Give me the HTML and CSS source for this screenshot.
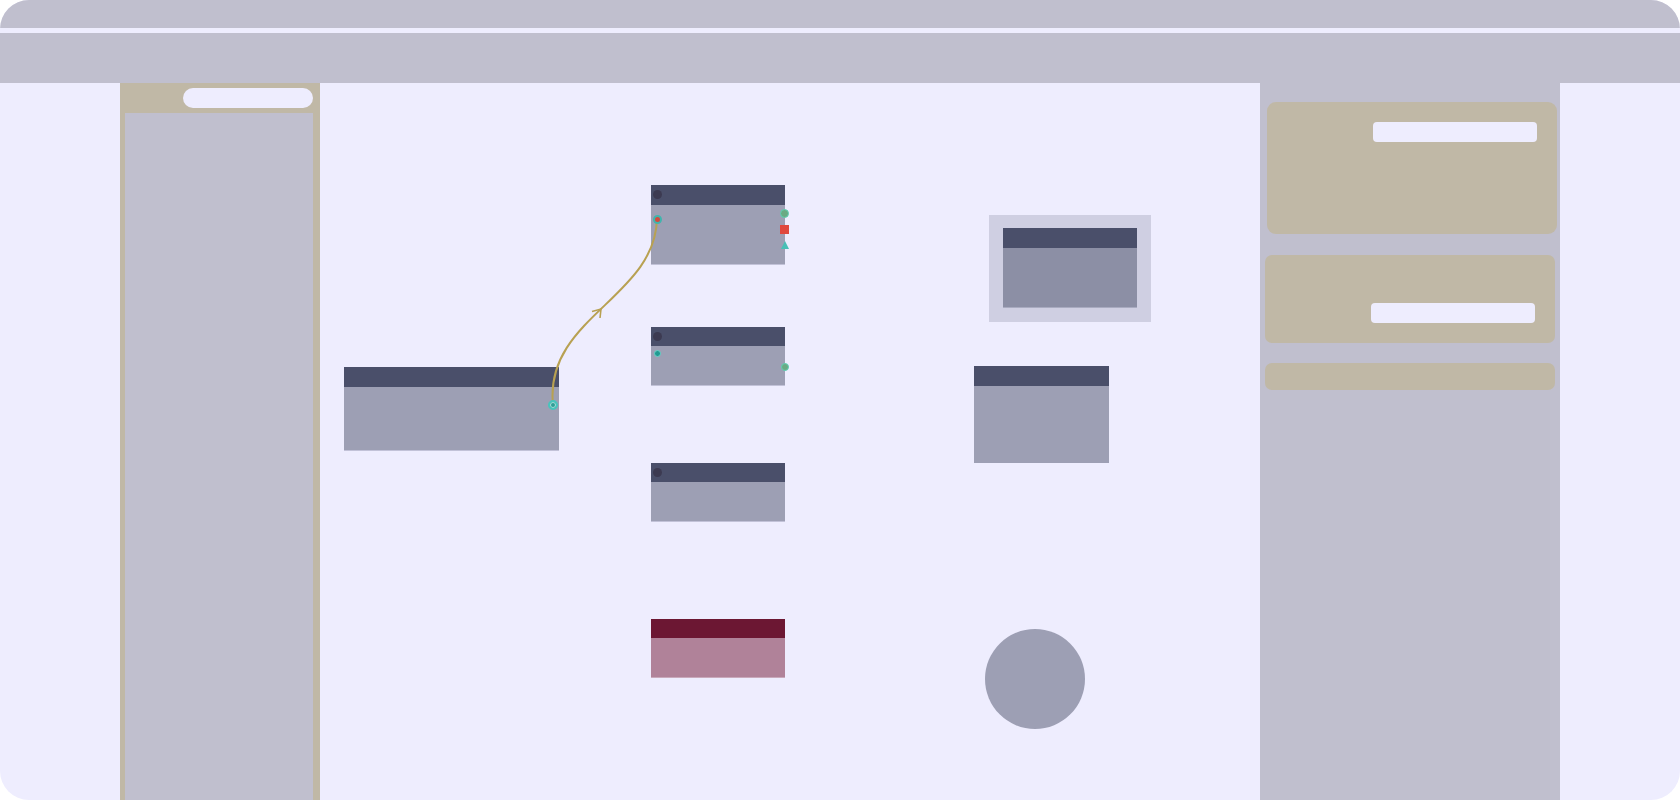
FILE: index.html
```html
<!DOCTYPE html>
<html>
<head>
<meta charset="utf-8">
<link rel="stylesheet" href="styles.css">
</head>
<body>
<div class="app">
  <div class="titlebar"></div>
  <div class="toolbar"></div>
  <div class="main">
    <div class="spacer-left"></div>
    <aside class="left-panel">
      <div class="left-head"><div class="pill"></div></div>
      <div class="left-body"></div>
    </aside>
    <section class="canvas">
      <svg class="edges" width="940" height="717" viewBox="0 0 940 717">
        <path d="M233 322 C 224 235, 335 215, 337 136" fill="none" stroke="#b8a152" stroke-width="2"/>
        <path d="M272 228.5 L281 226 L280 235" fill="none" stroke="#b8a152" stroke-width="1.6"/>
      </svg>

      <div class="node node-a">
        <div class="node-head"></div>
        <div class="node-body"></div>
        <span class="port port-ring port-a"></span>
      </div>

      <div class="node node-1">
        <div class="node-head"><span class="dot"></span></div>
        <div class="node-body"></div>
        <span class="port port-in-red"></span>
        <span class="port port-green p1-out"></span>
        <span class="port-square"></span>
        <span class="port-tri"></span>
      </div>

      <div class="node node-2">
        <div class="node-head"><span class="dot"></span></div>
        <div class="node-body"></div>
        <span class="port port-small p2-in"></span>
        <span class="port port-green p2-out"></span>
      </div>

      <div class="node node-3">
        <div class="node-head"><span class="dot"></span></div>
        <div class="node-body"></div>
      </div>

      <div class="node node-red">
        <div class="node-head"></div>
        <div class="node-body"></div>
      </div>

      <div class="group">
        <div class="group-node">
          <div class="node-head"></div>
          <div class="node-body"></div>
        </div>
      </div>

      <div class="node node-r">
        <div class="node-head"></div>
        <div class="node-body"></div>
      </div>

      <div class="circle"></div>
    </section>
    <aside class="right-panel">
      <div class="card card-1"><div class="field"></div></div>
      <div class="card card-2"><div class="field"></div></div>
      <div class="card card-3"></div>
    </aside>
    <div class="spacer-right"></div>
  </div>
</div>
</body>
</html>
```

FILE: styles.css
```css
* { box-sizing: border-box; }
html, body { margin: 0; padding: 0; background: #ffffff; }
body { width: 1680px; height: 800px; overflow: hidden; font-family: "Liberation Sans", sans-serif; }

.app {
  width: 1680px;
  height: 800px;
  border-radius: 29px;
  overflow: hidden;
  background: #eeedfe;
  display: flex;
  flex-direction: column;
}
.titlebar { height: 28px; background: #c0bfce; flex: none; }
.toolbar { height: 50px; margin-top: 5px; background: #c0bfce; flex: none; }

.main { flex: 1; display: flex; min-height: 0; }
.spacer-left { width: 120px; flex: none; }
.spacer-right { width: 120px; flex: none; }

.left-panel {
  width: 200px;
  flex: none;
  background: #c0b8a6;
  display: flex;
  flex-direction: column;
  padding: 0 7px 0 5px;
}
.left-head { height: 30px; display: flex; justify-content: flex-end; align-items: flex-start; padding-top: 5px; flex: none; }
.pill { width: 130px; height: 20px; border-radius: 10px; background: #eeedfe; }
.left-body { flex: 1; background: #c0bfce; }

.canvas { flex: 1; position: relative; }
.edges { position: absolute; left: 0; top: 0; z-index: 2; pointer-events: none; }

.node { position: absolute; width: 134px; display: flex; flex-direction: column; }
.node-head { height: 20px; background: #4a4f6a; position: relative; flex: none; }
.node-body { flex: 1; background: #9d9fb4; border-bottom: 1px solid #c2c2d8; }
.dot { position: absolute; left: 2px; top: 5px; width: 9px; height: 9px; border-radius: 50%; background: #3c3a51; }

.node-a { left: 24px; top: 284px; width: 215px; height: 84px; }
.node-1 { left: 331px; top: 102px; height: 80px; }
.node-2 { left: 331px; top: 244px; height: 59px; }
.node-2 .node-head { height: 19px; }
.node-3 { left: 331px; top: 380px; height: 59px; }
.node-3 .node-head { height: 19px; }
.node-red { left: 331px; top: 536px; height: 59px; }
.node-red .node-head { height: 19px; background: #6c1733; }
.node-red .node-body { background: #b08299; border-bottom-color: #c9a9bb; }
.node-r { left: 654px; top: 283px; width: 135px; height: 97px; }
.node-r .node-body { border-bottom: none; }

.port { position: absolute; border-radius: 50%; z-index: 3; }
.port-ring { width: 10px; height: 10px; right: 1px; top: 33px; background: #2f9e96; border: 2px solid #47c4bc; box-shadow: 0 0 0 1px #a3d9d6 inset; }
.port-in-red { width: 9px; height: 9px; left: 2px; top: 30px; background: #d44a3e; border: 2px solid #3fb5ad; }
.port-green { width: 9px; height: 9px; background: #6aaa84; border: 1px solid #5fd0b4; }
.p1-out { right: -4px; top: 24px; }
.port-square { position: absolute; width: 9px; height: 9px; right: -4px; top: 40px; background: #e0483e; z-index: 3; }
.port-tri { position: absolute; right: -4px; top: 56px; width: 0; height: 0; border-left: 4px solid transparent; border-right: 4px solid transparent; border-bottom: 8px solid #48c0b6; z-index: 3; }
.port-small { width: 7px; height: 7px; background: #229a92; border: 1px solid #6ad3c8; }
.p2-in { left: 3px; top: 23px; }
.p2-out { right: -4px; top: 36px; width: 8px; height: 8px; }

.group {
  position: absolute;
  left: 669px;
  top: 132px;
  width: 162px;
  height: 107px;
  background: #cfcfe2;
  padding: 13px 14px;
}
.group-node { width: 134px; height: 80px; display: flex; flex-direction: column; }
.group-node .node-body { background: #8c8fa5; border-bottom: 1px solid #a9abc0; }

.circle {
  position: absolute;
  left: 665px;
  top: 546px;
  width: 100px;
  height: 100px;
  border-radius: 50%;
  background: #9d9fb4;
}

.right-panel {
  width: 300px;
  flex: none;
  background: #c0bfce;
  display: flex;
  flex-direction: column;
  padding: 19px 5px 0 5px;
}
.card { background: #c0b8a6; border-radius: 7px; display: flex; justify-content: flex-end; }
.card-1 { height: 132px; margin: 0 -2px 0 2px; padding: 20px 20px 0 0; align-items: flex-start; border-radius: 9px; }
.card-2 { height: 88px; margin-top: 21px; padding: 48px 20px 0 0; align-items: flex-start; }
.card-3 { height: 27px; margin-top: 20px; }
.field { width: 164px; height: 20px; background: #eeedfe; border-radius: 4px; }
```
